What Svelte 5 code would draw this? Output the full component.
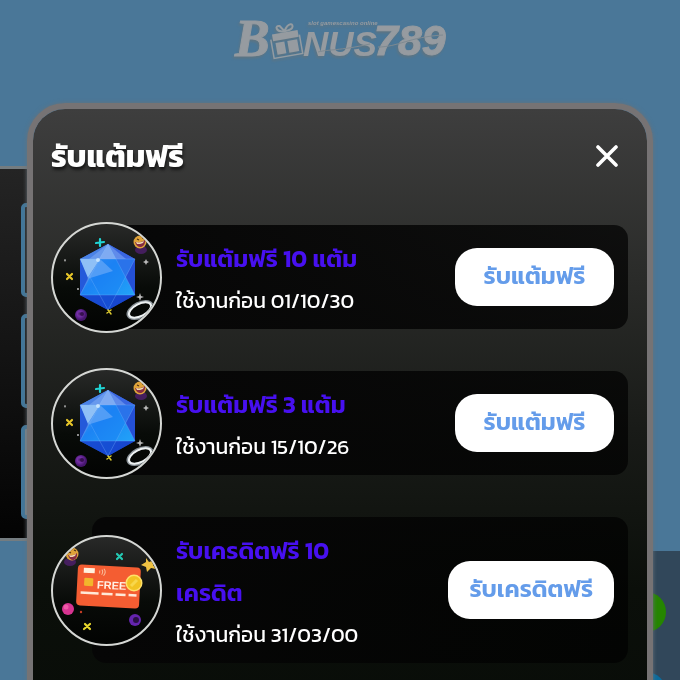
<script lang="ts">
  type Reward = {
    id: number;
    kind: 'gem' | 'card';
    title: string;
    expires: string;
    action: string;
  };

  const rewards: Reward[] = [
    { id: 1, kind: 'gem', title: 'รับแต้มฟรี 10 แต้ม', expires: '01/10/30', action: 'รับแต้มฟรี' },
    { id: 2, kind: 'gem', title: 'รับแต้มฟรี 3 แต้ม', expires: '15/10/26', action: 'รับแต้มฟรี' },
    { id: 3, kind: 'card', title: 'รับเครดิตฟรี 10 เครดิต', expires: '31/03/00', action: 'รับเครดิตฟรี' }
  ];

  let open = $state(true);
  let claimed = $state<number[]>([]);

  function claim(id: number) {
    claimed = [...claimed, id];
  }
</script>

{#snippet gemPicture()}
  <svg class="picture" viewBox="0 0 111 111" aria-hidden="true">
    <defs>
      <linearGradient id="gem-base" x1="0" y1="0" x2="1" y2="1">
        <stop offset="0" stop-color="#4b7fe4" />
        <stop offset="0.5" stop-color="#1e5fe4" />
        <stop offset="1" stop-color="#1a3cd0" />
      </linearGradient>
      <linearGradient id="gem-face" x1="0" y1="0" x2="1" y2="1">
        <stop offset="0" stop-color="#5a9df5" />
        <stop offset="0.5" stop-color="#1c84f4" />
        <stop offset="1" stop-color="#22a4f8" />
      </linearGradient>
      <radialGradient id="gem-orb" cx="0.4" cy="0.4">
        <stop offset="0" stop-color="#4b1b6e" />
        <stop offset="0.4" stop-color="#7530a8" />
        <stop offset="1" stop-color="#46156e" />
      </radialGradient>
    </defs>
    <path d="M57 22 84 37V73L57 88 29 73V37Z" fill="url(#gem-base)" />
    <path d="M57 22 29 73V37Z" fill="#4a82e6" />
    <path d="M57 22 84 37 84 73Z" fill="#3a66e0" />
    <path d="M57 22 84 73H29Z" fill="url(#gem-face)" />
    <path d="M29 37H84L57 88Z" fill="#1a80f4" opacity=".5" />
    <path d="M57 22 65 37H48Z" fill="#79a6f0" />
    <path d="M57 22 75 37H38Z" fill="#86b0f3" opacity=".5" />
    <path d="M29 37H49L36 57Z" fill="#8fc0f6" />
    <path d="M49 37 36 57 62 49Z" fill="#68a8f7" opacity=".7" />
    <path d="M29 37 37 56 29 73Z" fill="#2459da" />
    <path d="M84 37V73L75 55Z" fill="#2450d6" />
    <path d="M29 73H84L57 88Z" fill="#1546cc" opacity=".75" />
    <path d="M29 37H84L57 88ZM57 22 84 73H29Z" fill="none" stroke="#82bcff" stroke-width=".5" opacity=".6" />
    <circle cx="47" cy="38" r="2" fill="#d5ecff" opacity=".8" />
    <g fill="none" stroke-width="2.2" stroke-linecap="round">
      <path d="M49 17v7M45 21l8-1" stroke="#20d5d5" />
      <path d="M16 52l5 5M21 52l-5 5" stroke="#e7c629" />
      <path d="M57 88l3 4M60 88l-4 3" stroke="#dcca30" stroke-width="1.5" />
    </g>
    <g fill="#b9b9b9">
      <path d="M95 37l1 2 2 1-2 1-1 2-1-2-2-1 2-1ZM89 71l1 3 3 1-3 1-1 3-1-3-3-1 3-1ZM14 37l1 1-1 2-1-2Z" />
      <circle cx="27" cy="67" r="1" />
    </g>
    <circle cx="30" cy="93" r="6" fill="url(#gem-orb)" />
    <circle cx="31" cy="92" r="2" fill="#36104f" />
    <ellipse cx="90" cy="28" rx="6" ry="4" fill="#57207a" opacity=".7" />
    <circle cx="89" cy="20" r="6.5" fill="#dfa33a" />
    <path d="M84 20c3 1 7 0 10-2 1 8-8 10-10 2Z" fill="#862c43" />
    <path d="M85 20c3 1 6 0 8-1l-1 2c-2 1-4 1-6 1Z" fill="#f0d9b0" />
    <path d="M86 17l2 1M91 16l2 0" stroke="#4d2e16" stroke-width="1.2" />
    <ellipse cx="89" cy="88" rx="13" ry="7" transform="rotate(-27 89 88)" fill="none" stroke="#899197" stroke-width="3" />
    <ellipse cx="89" cy="88" rx="12" ry="6" transform="rotate(-27 89 88)" fill="none" stroke="#eef2f3" stroke-width="2" />
  </svg>
{/snippet}

{#snippet cardPicture()}
  <svg class="picture" viewBox="0 0 111 111" aria-hidden="true">
    <g transform="rotate(3 57 51)">
      <rect x="26" y="31" width="63" height="41" rx="4" fill="#f45d32" />
      <rect x="32" y="34" width="11" height="5" fill="#fff1df" />
      <rect x="33" y="44" width="9" height="8" rx="1" fill="#f2b62c" />
      <path d="M48 36v3M50 35q2 2 0 5M52 34q3 3 0 7" fill="none" stroke="#f9bf9d" stroke-width="1" />
      <text x="46" y="54" class="free-label">FREE</text>
      <path d="M30 59h18M51 59h11M65 59h10M78 59h8" stroke="#ffe9d8" stroke-width="2.5" />
    </g>
    <circle cx="83" cy="48" r="8.5" fill="#ffe169" />
    <circle cx="83" cy="48" r="7" fill="#f2c322" />
    <path d="M80 51l6-6" stroke="#f8d74c" stroke-width="3" />
    <g fill="none" stroke-width="2.2" stroke-linecap="round">
      <path d="M66 19l5 5M71 19l-5 5" stroke="#24c9b3" />
      <path d="M34 89l5 5M39 89l-6 5" stroke="#e8d82c" />
    </g>
    <ellipse cx="19" cy="27" rx="6" ry="4" fill="#57207a" opacity=".7" />
    <circle cx="21" cy="19" r="6.5" fill="#dfa33a" />
    <path d="M17 20c3 1 7 0 9-2 1 8-7 10-9 2Z" fill="#862c43" />
    <path d="M18 20c2 1 5 0 7-1l-1 2c-2 1-3 1-5 1Z" fill="#f0d9b0" />
    <path d="M18 17l2 1M23 15l2 1" stroke="#4d2e16" stroke-width="1.2" />
    <path d="M95 23l3 4 6-2-2 5 3 4-5-1-4 4-1-5-5-2 5-3Z" fill="#efc243" />
    <circle cx="17" cy="74" r="6" fill="#d73491" />
    <circle cx="15" cy="72" r="2.5" fill="#ef5aa8" />
    <circle cx="30" cy="77" r="1.2" fill="#c53d25" />
    <circle cx="84" cy="85" r="6" fill="#6424ae" />
    <circle cx="85" cy="85" r="3" fill="#281044" />
  </svg>
{/snippet}

<div class="page">
  <header class="site-header">
    <svg class="logo" viewBox="0 0 216 48" role="img" aria-label="Bonus789">
      <text x="3" y="40" class="logo-b">B</text>
      <text x="71" y="40" class="logo-nus">NUS</text>
      <text x="142" y="39" class="logo-number">789</text>
      <text x="76" y="9" class="logo-tagline">slot gamescasino online</text>
      <g transform="translate(5 1) rotate(-10 50 28)">
        <path d="M37 15h26v7H37ZM39 24h9v12h-9ZM51 24h10v12H51Z" />
        <path d="M50 14C41 14 41 6 46 8l4 6c5-9 11-6 8-2-2 2-5 2-8 2" fill="none" stroke="#939ba1" stroke-width="2" />
        <path d="M35 20v19h29V20" fill="none" stroke="#939ba1" stroke-width="1.5" />
      </g>
      <path d="M86 36c12-3 20-1 52-8M146 31c20 0 31-10 65-12" fill="none" stroke="#7f8a91" stroke-width="1" />
    </svg>
  </header>

  <main class="menu-card">
    <div class="menu-tile"></div>
    <div class="menu-tile"></div>
    <div class="menu-tile menu-tile-active"></div>
  </main>

  <aside class="contact">
    <span class="contact-dot"></span>
    <span class="contact-dot contact-dot-blue"></span>
  </aside>

  {#if open}
    <div class="backdrop">
      <div class="modal" role="dialog" aria-modal="true" aria-labelledby="modal-title">
        <div class="modal-header">
          <h1 id="modal-title">รับแต้มฟรี</h1>
          <button type="button" class="close" aria-label="ปิด" onclick={() => (open = false)}>
            <svg viewBox="0 0 22 22" aria-hidden="true">
              <path d="M2 2 20 20M20 2 2 20" />
            </svg>
          </button>
        </div>

        <ul class="rewards">
          {#each rewards as reward (reward.id)}
            <li class="reward">
              <div class="thumb">
                {#if reward.kind === 'gem'}
                  {@render gemPicture()}
                {:else}
                  {@render cardPicture()}
                {/if}
              </div>
              <div class="info">
                <h2>{reward.title}</h2>
                <p>ใช้งานก่อน {reward.expires}</p>
              </div>
              <button
                type="button"
                class="claim"
                disabled={claimed.includes(reward.id)}
                onclick={() => claim(reward.id)}
              >
                {reward.action}
              </button>
            </li>
          {/each}
        </ul>
      </div>
    </div>
  {/if}
</div>

<style>
  :global(body) {
    margin: 0;
    background: #4a7798;
  }

  .page {
    box-sizing: border-box;
    height: 100vh;
    overflow: hidden;
    background: #4a7798;
    font-family: Kanit, Prompt, 'Noto Sans Thai', 'Noto Sans', sans-serif;
  }

  .site-header {
    display: flex;
    justify-content: center;
    padding: 16px 0 102px;
  }

  .logo {
    width: 216px;
    height: 48px;
    overflow: visible;
    fill: #969ba0;
    filter: drop-shadow(-1px 2px 1px #5d7482);
  }

  .logo-b {
    font: italic bold 52px 'Liberation Serif', serif;
    stroke: #969ba0;
    stroke-width: 1;
  }

  .logo-nus {
    font: italic bold 35px 'Liberation Sans', sans-serif;
  }

  .logo-number {
    font: italic bold 43px 'Liberation Sans', sans-serif;
    stroke: #969ba0;
    stroke-width: 1;
  }

  .logo-tagline {
    font: italic bold 6px 'Liberation Sans', sans-serif;
  }

  .menu-card {
    display: flex;
    flex-direction: column;
    gap: 17px;
    width: 60%;
    box-sizing: border-box;
    padding: 34px 21px 19px;
    border-top: 3px solid #747c80;
    border-bottom: 3px solid #747c80;
    background: linear-gradient(#242424, #030303);
  }

  .menu-tile {
    box-sizing: border-box;
    height: 94px;
    border: 4px solid #42779a;
    border-radius: 5px;
  }

  .menu-tile-active {
    background: #7b868d;
  }

  .contact {
    position: fixed;
    right: 0;
    bottom: 0;
    display: flex;
    flex-direction: column;
    gap: 40px;
    box-sizing: border-box;
    width: 54px;
    height: 129px;
    padding-top: 41px;
    overflow: hidden;
    background: #31475a;
  }

  .contact-dot {
    flex: none;
    width: 40px;
    height: 40px;
    border-radius: 50%;
    background: #258500;
  }

  .contact-dot-blue {
    background: #0b6b9c;
  }

  .backdrop {
    position: fixed;
    inset: 0;
    padding: 103px 27px 0;
    overflow: hidden;
  }

  .modal {
    box-sizing: border-box;
    min-height: 700px;
    padding: 23px 19px 24px 18px;
    border: 6px solid #767374;
    border-radius: 38px;
    background: linear-gradient(#3e3e3e 0, #2a2b29 170px, #191b18 320px, #0b0f0a 480px, #070b07 100%) padding-box;
    box-shadow: 0 0 4px #67727a;
    color: #fff;
  }

  .modal-header {
    display: flex;
    align-items: center;
    justify-content: space-between;
    height: 48px;
    padding-right: 10px;
  }

  h1 {
    margin: 0;
    font-size: 31px;
    font-weight: 700;
    line-height: 48px;
    text-shadow: 1px 3px 3px #171717;
  }

  .close {
    display: flex;
    padding: 0;
    border: 0;
    background: none;
    cursor: pointer;
  }

  .close svg {
    width: 22px;
    height: 22px;
    fill: none;
    stroke: #fff;
    stroke-width: 3.6;
    stroke-linecap: round;
  }

  .rewards {
    display: flex;
    flex-direction: column;
    gap: 42px;
    margin: 45px 0 0;
    padding: 0;
    list-style: none;
  }

  .reward {
    display: flex;
    align-items: center;
    gap: 14px;
    margin-left: 41px;
    padding: 7px 14px 7px 0;
    border-radius: 14px;
    background: linear-gradient(90deg, #060606, rgba(0, 0, 0, 0.7));
  }

  .thumb {
    flex: none;
    box-sizing: border-box;
    width: 111px;
    height: 111px;
    margin: -14px 0 -14px -41px;
    overflow: hidden;
    border: 2px solid #d5d7d4;
    border-radius: 50%;
    background: linear-gradient(#282928, #080b08 60%, #020302);
  }

  .picture {
    display: block;
    width: 111px;
    height: 111px;
    margin: -2px;
  }

  .free-label {
    fill: #fff1e6;
    font: bold 11px 'Liberation Sans', sans-serif;
  }

  .info {
    flex: 1;
    min-width: 0;
    padding-top: 6px;
  }

  h2,
  p {
    margin: 0;
    line-height: 42px;
  }

  h2 {
    max-width: 200px;
    color: #4710f0;
    font-size: 24px;
    font-weight: 600;
  }

  p {
    font-size: 21px;
    white-space: nowrap;
  }

  .claim {
    flex: none;
    min-width: 159px;
    height: 58px;
    padding: 0 21px 3px;
    border: 0;
    border-radius: 22px;
    background: #fff;
    color: #649cea;
    font: 600 24px Kanit, Prompt, 'Noto Sans Thai', 'Noto Sans', sans-serif;
    cursor: pointer;
  }

  .claim:disabled {
    opacity: 0.5;
    cursor: default;
  }
</style>
